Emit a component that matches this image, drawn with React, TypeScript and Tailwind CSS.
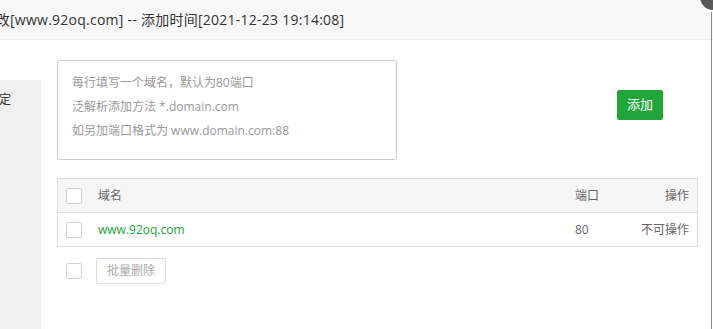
import React from 'react';

const font = { fontFamily: '"Open Sans", "Noto Sans CJK SC", sans-serif' };

function Checkbox() {
  return <span className="block w-4 h-4 border border-[#d2d2d2] rounded-[2px] bg-white" />;
}

export default function App() {
  return (
    <div className="relative w-[713px] h-[329px] bg-white overflow-hidden text-[#333]" style={font}>
      {/* header */}
      <div className="h-10 bg-[#f8f8f8] border-b border-[#eee] flex items-center overflow-hidden">
        <span className="whitespace-nowrap text-[14px] text-[#333] -ml-[47px] tracking-[0.25px]">
          站点修改[www.92oq.com] -- 添加时间[2021-12-23 19:14:08]
        </span>
      </div>

      <div className="flex h-[289px]">
        {/* left nav */}
        <div className="w-[41px] shrink-0 overflow-hidden flex flex-col">
          <div className="h-10 bg-white" />
          <div className="flex-1 bg-[#f0f0f0] pt-[10px]">
            <div className="whitespace-nowrap text-[12px] text-[#333] -ml-[37px] h-5 leading-5">域名绑定</div>
          </div>
        </div>

        {/* content */}
        <div className="flex-1 pl-4 pt-5 pr-[15px]">
          <div className="flex">
            <div className="w-[340px] h-[100px] border border-[#ccc] rounded-[2px] px-[14px] pt-[10px] text-[12px] leading-6 text-[#999]">
              <div>每行填写一个域名，默认为80端口</div>
              <div>泛解析添加方法 *.domain.com</div>
              <div>如另加端口格式为 www.domain.com:88</div>
            </div>
            <button className="ml-auto mr-[35px] mt-[30px] h-[30px] w-[46px] bg-[#20a53a] text-white text-[13px] rounded-[2px] whitespace-nowrap">
              添加
            </button>
          </div>

          <div className="mt-[18px] border border-[#ddd] text-[12px]">
            <div className="h-[34px] bg-[#f6f6f6] border-b border-[#ddd] flex items-center pl-[8px] pr-[8px] text-[#666]">
              <Checkbox />
              <span className="ml-4">域名</span>
              <span className="ml-auto w-[62px]">端口</span>
              <span className="w-[52px] text-right">操作</span>
            </div>
            <div className="h-[33px] flex items-center pl-[8px] pr-[8px] text-[#666]">
              <Checkbox />
              <span className="ml-4 text-[#20a53a]">www.92oq.com</span>
              <span className="ml-auto w-[62px]">80</span>
              <span className="w-[52px] text-right">不可操作</span>
            </div>
          </div>

          <div className="mt-[11px] flex items-center pl-[9px]">
            <Checkbox />
            <button className="ml-[14px] h-[26px] w-[70px] border border-[#ddd] rounded-[2px] text-[12px] text-[#aaa] bg-white">
              批量删除
            </button>
          </div>
        </div>
      </div>

      {/* right edge line */}
      <div className="absolute right-[1px] top-3 bottom-0 w-px bg-[#8a8a8a]" />
      {/* close button */}
      <div className="absolute -right-[15px] -top-[18px] w-[30px] h-[30px] rounded-full bg-[#5a5a5a] border-2 border-white" />
    </div>
  );
}
